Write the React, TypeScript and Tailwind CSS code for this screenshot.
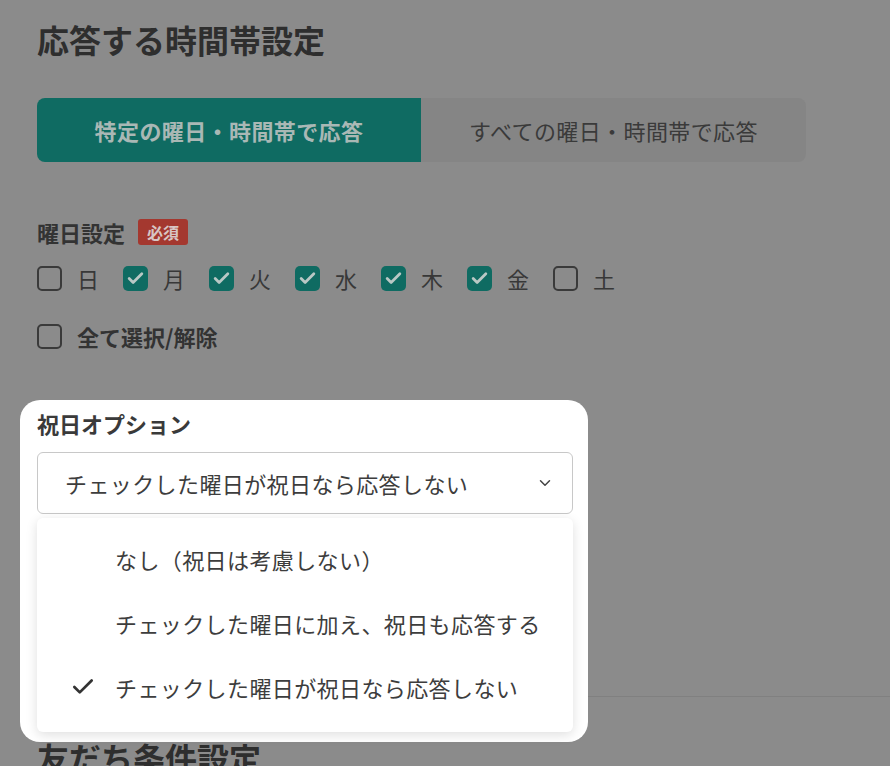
import React from "react";
import { Check, ChevronDown } from "lucide-react";

const days = [
  { label: "日", checked: false },
  { label: "月", checked: true },
  { label: "火", checked: true },
  { label: "水", checked: true },
  { label: "木", checked: true },
  { label: "金", checked: true },
  { label: "土", checked: false },
];

function Box({ checked }: { checked: boolean }) {
  if (checked) {
    return (
      <span className="flex h-[25px] w-[25px] items-center justify-center rounded-[5px] bg-[#0f6b62]">
        <Check size={19} strokeWidth={3.5} className="text-[#b9c8c5]" />
      </span>
    );
  }
  return <span className="block h-[25px] w-[25px] rounded-[5px] border-2 border-[#3a3a3a]" />;
}

export default function App() {
  return (
    <div className="h-[766px] w-[890px] overflow-hidden bg-[#8b8b8b] pl-[37px] font-['Noto_Sans_CJK_JP',sans-serif] text-[#303030]">
      <h1 className="pt-[19px] text-[32px] font-bold leading-[40px] text-[#2e2e2e]">応答する時間帯設定</h1>

      <div className="mt-[39px] flex h-[64px] w-[769px] overflow-hidden rounded-[8px]">
        <div className="flex w-[384px] items-center justify-center bg-[#0f6b62] text-[22px] font-bold tracking-[0.4px] text-[#a9b8b5]">
          特定の曜日・時間帯で応答
        </div>
        <div className="flex flex-1 items-center justify-center bg-[#858585] text-[22px] tracking-[0.4px] text-[#3a3a3a]">
          すべての曜日・時間帯で応答
        </div>
      </div>

      <div className="mt-[57px] flex h-[26px] items-center gap-[13px]">
        <span className="text-[22px] font-bold text-[#333]">曜日設定</span>
        <span className="flex h-[26px] items-center rounded-[3px] bg-[#a4382f] px-[9px] text-[16px] font-bold text-[#d8c6c4]">
          必須
        </span>
      </div>

      <div className="mt-[19px] flex h-[28px] items-center gap-[24px]">
        {days.map((d) => (
          <div key={d.label} className="flex items-center gap-[15px]">
            <Box checked={d.checked} />
            <span className="w-[22px] text-[22px] leading-[28px] text-[#383838]">{d.label}</span>
          </div>
        ))}
      </div>

      <div className="mt-[30px] flex h-[28px] items-center gap-[15px]">
        <Box checked={false} />
        <span className="text-[22px] font-bold leading-[28px] text-[#333]">全て選択/解除</span>
      </div>

      <div className="relative z-10 -ml-[17px] mt-[50px] w-[568px] rounded-[20px] bg-white pb-[10px] pl-[17px] pr-[15px] pt-[9px]">
        <div className="text-[22px] font-bold leading-[28px] text-[#3a3a3a]">祝日オプション</div>
        <div className="mt-[15px] flex h-[62px] items-center justify-between rounded-[6px] border border-[#c8c8c8] pl-[27px] pr-[18px]">
          <span className="text-[22px] tracking-[0.4px] text-[#3d3d3d]">チェックした曜日が祝日なら応答しない</span>
          <ChevronDown size={18} strokeWidth={2} className="text-[#444]" />
        </div>
        <div className="mt-[4px] rounded-[6px] bg-white pb-[13px] pt-[9px] shadow-[0_3px_12px_rgba(0,0,0,0.13)]">
          {[
            { t: "なし（祝日は考慮しない）", c: false },
            { t: "チェックした曜日に加え、祝日も応答する", c: false },
            { t: "チェックした曜日が祝日なら応答しない", c: true },
          ].map((o) => (
            <div key={o.t} className="flex h-[64px] items-center">
              <span className="flex w-[78px] justify-end pr-[19px]">
                {o.c && <Check size={26} strokeWidth={2.5} className="text-[#333]" />}
              </span>
              <span className="text-[22px] tracking-[0.4px] text-[#3d3d3d]">{o.t}</span>
            </div>
          ))}
        </div>
      </div>

      <div className="-mt-[46px]">
        <div className="h-px w-full bg-[#808080]" />
        <h2 className="mt-[40px] text-[32px] font-bold leading-[40px] text-[#2e2e2e]">友だち条件設定</h2>
      </div>
    </div>
  );
}
